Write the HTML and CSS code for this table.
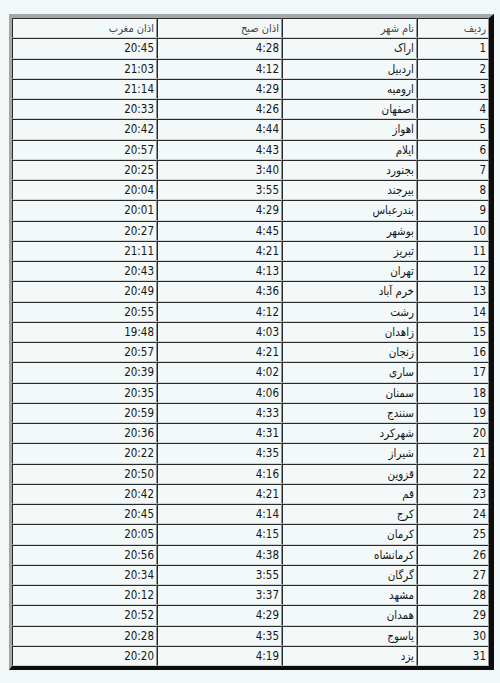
FILE: index.html
```html
<!DOCTYPE html>
<html lang="fa">
<head>
<meta charset="utf-8">
<title>اوقات شرعی</title>
<link rel="stylesheet" href="styles.css">
</head>
<body>
<table class="times" dir="rtl">
<colgroup><col class="c-num"><col class="c-city"><col class="c-fajr"><col class="c-magh"></colgroup>
<thead>
<tr><th>ردیف</th><th>نام شهر</th><th>اذان صبح</th><th>اذان مغرب</th></tr>
</thead>
<tbody>
<tr><td>1</td><td>اراک</td><td>4:28</td><td>20:45</td></tr>
<tr><td>2</td><td>اردبیل</td><td>4:12</td><td>21:03</td></tr>
<tr><td>3</td><td>ارومیه</td><td>4:29</td><td>21:14</td></tr>
<tr><td>4</td><td>اصفهان</td><td>4:26</td><td>20:33</td></tr>
<tr><td>5</td><td>اهواز</td><td>4:44</td><td>20:42</td></tr>
<tr><td>6</td><td>ایلام</td><td>4:43</td><td>20:57</td></tr>
<tr><td>7</td><td>بجنورد</td><td>3:40</td><td>20:25</td></tr>
<tr><td>8</td><td>بیرجند</td><td>3:55</td><td>20:04</td></tr>
<tr><td>9</td><td>بندرعباس</td><td>4:29</td><td>20:01</td></tr>
<tr><td>10</td><td>بوشهر</td><td>4:45</td><td>20:27</td></tr>
<tr><td>11</td><td>تبریز</td><td>4:21</td><td>21:11</td></tr>
<tr><td>12</td><td>تهران</td><td>4:13</td><td>20:43</td></tr>
<tr><td>13</td><td>خرم آباد</td><td>4:36</td><td>20:49</td></tr>
<tr><td>14</td><td>رشت</td><td>4:12</td><td>20:55</td></tr>
<tr><td>15</td><td>زاهدان</td><td>4:03</td><td>19:48</td></tr>
<tr><td>16</td><td>زنجان</td><td>4:21</td><td>20:57</td></tr>
<tr><td>17</td><td>ساری</td><td>4:02</td><td>20:39</td></tr>
<tr><td>18</td><td>سمنان</td><td>4:06</td><td>20:35</td></tr>
<tr><td>19</td><td>سنندج</td><td>4:33</td><td>20:59</td></tr>
<tr><td>20</td><td>شهرکرد</td><td>4:31</td><td>20:36</td></tr>
<tr><td>21</td><td>شیراز</td><td>4:35</td><td>20:22</td></tr>
<tr><td>22</td><td>قزوین</td><td>4:16</td><td>20:50</td></tr>
<tr><td>23</td><td>قم</td><td>4:21</td><td>20:42</td></tr>
<tr><td>24</td><td>کرج</td><td>4:14</td><td>20:45</td></tr>
<tr><td>25</td><td>کرمان</td><td>4:15</td><td>20:05</td></tr>
<tr><td>26</td><td>کرمانشاه</td><td>4:38</td><td>20:56</td></tr>
<tr><td>27</td><td>گرگان</td><td>3:55</td><td>20:34</td></tr>
<tr><td>28</td><td>مشهد</td><td>3:37</td><td>20:12</td></tr>
<tr><td>29</td><td>همدان</td><td>4:29</td><td>20:52</td></tr>
<tr><td>30</td><td>یاسوج</td><td>4:35</td><td>20:28</td></tr>
<tr><td>31</td><td>یزد</td><td>4:19</td><td>20:20</td></tr>
</tbody>
</table>
</body>
</html>
```
FILE: styles.css
```css
html, body {
  margin: 0;
  padding: 0;
  background: #f2f8f8;
}
body {
  padding: 14px 0 0 9px;
  font-family: "DejaVu Sans Condensed", "DejaVu Sans", "Noto Sans", sans-serif;
  font-size: 11.5px;
  color: #151515;
}
.times {
  table-layout: fixed;
  border-collapse: separate;
  border-spacing: 0;
  width: 485px;
  border-style: solid;
  border-width: 4px 5px 4px 3px;
  border-color: #a4a8a8 #0c0c0c #0c0c0c #a4a8a8;
  background: #f3f9f9;
}
.c-num { width: 72px; }
.c-city { width: 135px; }
.c-fajr { width: 125px; }
.c-magh { width: 145px; }
.times th,
.times td {
  box-sizing: border-box;
  height: 20.25px;
  padding: 0 2px 0 2px;
  text-align: right;
  vertical-align: middle;
  font-weight: normal;
  white-space: nowrap;
  overflow: hidden;
  border-style: solid;
  border-width: 1px;
  border-color: #2a2a2a #8c9090 #d0d4d4 #2a2a2a;
}
.times th {
  color: #444;
  font-size: 11px;
}
```
